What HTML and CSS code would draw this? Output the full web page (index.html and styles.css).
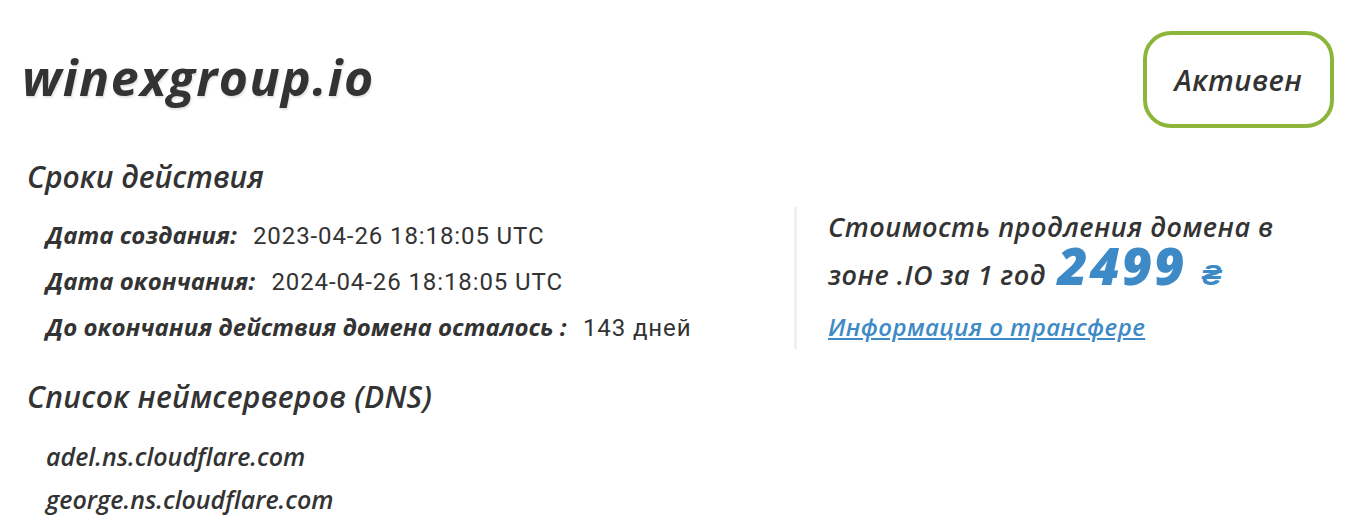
FILE: index.html
```html
<!DOCTYPE html>
<html lang="ru">
  <head>
    <meta charset="UTF-8" />
    <meta name="viewport" content="width=device-width, initial-scale=1.0" />
    <title>winexgroup.io</title>
    <link rel="stylesheet" href="styles.css">
  </head>
  <body>
    <div class="page">
      <div class="header">
        <h1 class="domain">winexgroup.io</h1>
        <div class="status">Активен</div>
      </div>

      <div class="info">
        <div class="dates">
          <h2>Сроки действия</h2>
          <div class="row"><span class="label">Дата создания:</span> <span class="value">2023-04-26 18:18:05 UTC</span></div>
          <div class="row"><span class="label">Дата окончания:</span> <span class="value">2024-04-26 18:18:05 UTC</span></div>
          <div class="row"><span class="label">До окончания действия домена осталось :</span> <span class="value">143 дней</span></div>
        </div>

        <div class="price">
          <p class="price-text">Стоимость продления домена в<br>зоне .IO за 1 год <span class="sum">2499 <span class="cur">₴</span></span></p>
          <a href="#" class="transfer">Информация о трансфере</a>
        </div>
      </div>

      <h2 class="dns-title">Список неймсерверов (DNS)</h2>
      <ul class="dns">
        <li>adel.ns.cloudflare.com</li>
        <li>george.ns.cloudflare.com</li>
      </ul>
    </div>
  </body>
</html>
```

FILE: styles.css
```css
body {
  margin: 0;
  background: #fff;
  color: #333;
  font-family: "Open Sans", sans-serif;
}

.page {
  padding: 31px 18px 0 22px;
}

.header {
  display: flex;
  justify-content: space-between;
  align-items: flex-start;
}

.domain {
  margin: 18px 0 0;
  font-size: 50px;
  font-weight: bold;
  font-style: italic;
  letter-spacing: 1.4px;
  line-height: 56px;
  text-shadow: 1px 2px 2px #e2e2e2;
}

.status {
  width: 183px;
  height: 89px;
  border: 4px solid #8db53c;
  border-radius: 28px;
  display: flex;
  align-items: center;
  justify-content: center;
  font-size: 29px;
  font-style: italic;
  font-weight: 600;
  letter-spacing: 0.5px;
}

h2 {
  margin: 0;
  padding-left: 5px;
  font-size: 30px;
  font-style: italic;
  font-weight: 600;
  line-height: 36px;
}

.info {
  display: flex;
  margin-top: 31px;
}

.dates {
  width: 772px;
}

.dates h2 {
  margin-bottom: 22px;
}

.row {
  padding-left: 24px;
  margin-top: 9px;
  font-size: 24px;
  line-height: 36px;
}

.label {
  font-weight: bold;
  font-style: italic;
}

.value {
  font-family: "Roboto", sans-serif;
  letter-spacing: 0.9px;
  margin-left: 10px;
}

.price {
  margin-top: 48px;
  border-left: 3px solid #f0f0f0;
  padding: 0 0 0 31px;
  height: 142px;
}

.price-text {
  margin: -4px 0 0;
  font-size: 27px;
  font-style: italic;
  font-weight: 600;
  letter-spacing: 0.5px;
  line-height: 48px;
}

.sum {
  margin-left: 4px;
  color: #3e8ac7;
  font-size: 52px;
  font-weight: 800;
  letter-spacing: 2px;
  line-height: 24px;
}

.cur {
  font-size: 30px;
}

.transfer {
  display: block;
  margin-top: 12px;
  color: #3e8ac7;
  font-size: 24px;
  font-style: italic;
  font-weight: 600;
  letter-spacing: 0.4px;
  line-height: 32px;
}

.dns-title {
  margin-top: 30px;
  letter-spacing: 0.3px;
}

.dns {
  list-style: none;
  margin: 20px 0 0;
  padding-left: 24px;
}

.dns li {
  font-size: 25px;
  font-style: italic;
  font-weight: 600;
  line-height: 43px;
}
```
